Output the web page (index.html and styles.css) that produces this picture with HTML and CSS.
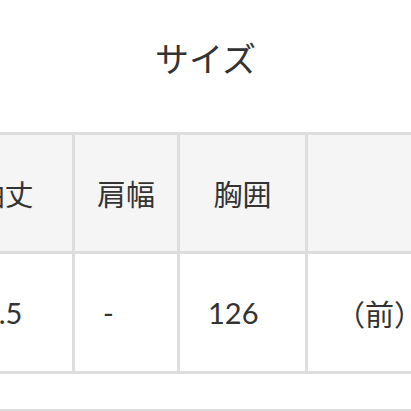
FILE: index.html
```html
<!DOCTYPE html>
<html lang="ja">
<head>
<meta charset="utf-8">
<link rel="stylesheet" href="styles.css">
</head>
<body>
<div class="page">
  <h2 class="title">サイズ</h2>
  <div class="scroller">
    <div class="grid">
      <div class="cell head">袖丈</div>
      <div class="cell head">肩幅</div>
      <div class="cell head">胸囲</div>
      <div class="cell head"></div>
      <div class="cell data">81.5</div>
      <div class="cell data">-</div>
      <div class="cell data">126</div>
      <div class="cell data">（前）</div>
    </div>
    <div class="after"></div>
  </div>
</div>
</body>
</html>
```
FILE: styles.css
```css
html, body {
  margin: 0;
  padding: 0;
  background: #ffffff;
}
.page {
  width: 411px;
  height: 411px;
  overflow: hidden;
  font-family: Lato, "Noto Sans CJK JP", sans-serif;
  color: #333333;
}
.title {
  margin: 38px 0 54px;
  height: 40px;
  line-height: 40px;
  font-size: 34px;
  font-weight: 400;
  text-align: center;
  font-family: "Noto Sans CJK JP", sans-serif;
}
.scroller {
  width: 411px;
  overflow: hidden;
}
.grid {
  display: grid;
  grid-template-columns: 135px 102px 125px 160px;
  grid-template-rows: 116px 117px;
  gap: 3px;
  padding: 3px 0;
  background: #dddddd;
  margin-left: -63px;
  width: max-content;
}
.cell {
  display: flex;
  align-items: center;
  font-size: 29px;
}
.head {
  background: #f5f5f5;
  justify-content: center;
  font-family: "Noto Sans CJK JP", sans-serif;
}
.data {
  background: #ffffff;
  padding-left: 28px;
}
.after {
  height: 35px;
  border-bottom: 2px solid #dddddd;
}
```
